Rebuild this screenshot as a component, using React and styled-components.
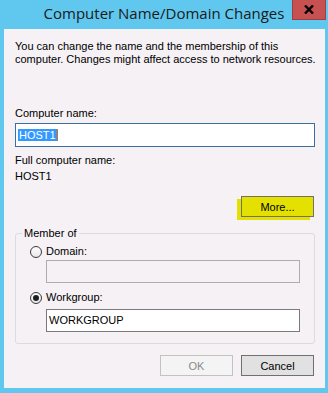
import React from 'react';
import styled, { createGlobalStyle } from 'styled-components';

const GlobalStyle = createGlobalStyle`
    html, body {
        margin: 0;
        padding: 0;
        background: #60c8ef;
    }
    * {
        box-sizing: border-box;
    }
`;

const Window = styled.div`
    width: 328px;
    height: 393px;
    background: #60c8ef;
    display: flex;
    flex-direction: column;
    font-family: "Liberation Sans", Arial, sans-serif;
    font-size: 11px;
    color: #000;
`;

const TitleBar = styled.div`
    height: 29px;
    display: grid;
    grid-template-columns: 1fr auto 1fr;
`;

const Title = styled.div`
    grid-column: 2;
    font-family: "Open Sans", "Noto Sans", sans-serif;
    font-size: 15px;
    line-height: 27px;
    color: #1a1a1a;
    white-space: nowrap;
`;

const CloseButton = styled.button`
    grid-column: 3;
    justify-self: end;
    align-self: start;
    width: 34px;
    height: 20px;
    margin-right: 2px;
    padding: 0;
    border: 1px solid #9e3f3f;
    border-top: none;
    background: #c75050;
    display: flex;
    align-items: center;
    justify-content: center;
`;

const Client = styled.div`
    flex: 1;
    margin: 0 3px 5px 4px;
    background: #f5f1f5;
    padding: 11px 10px 12px 11px;
    display: flex;
    flex-direction: column;
`;

const Text = styled.div`
    line-height: 13px;
    margin-top: ${(props) => props.$mt || 0}px;
    white-space: nowrap;
`;

const Field = styled.div`
    height: ${(props) => props.$h || 24}px;
    width: ${(props) => props.$w ? props.$w + 'px' : '100%'};
    margin-top: ${(props) => props.$mt || 0}px;
    margin-left: ${(props) => props.$ml || 0}px;
    border: 1px solid ${(props) => props.$border};
    background: ${(props) => props.$bg || '#fff'};
    padding: 0 2px;
    display: flex;
    align-items: center;
    line-height: 13px;
`;

const Selection = styled.span`
    background: #3399ff;
    color: #fff;
    line-height: 12px;
    padding: 0 1px;
`;

const Caret = styled.span`
    width: 1px;
    height: 12px;
    background: #e07000;
`;

const Button = styled.button`
    width: 73px;
    height: 21px;
    padding: 0;
    font-family: "Liberation Sans", Arial, sans-serif;
    font-size: 11px;
    color: ${(props) => props.disabled ? '#8a8a8a' : '#000'};
    background: ${(props) => props.disabled ? '#f4f4f4' : '#e1e1e1'};
    border: 1px solid ${(props) => props.disabled ? '#c2c2c2' : '#707070'};
`;

const MoreButton = styled(Button)`
    align-self: flex-end;
    margin-top: 13px;
    margin-right: 1px;
    background: #e4e000;
    box-shadow: -4px 3px 0 0 #e4e000;
`;

const Group = styled.fieldset`
    margin: 10px 0 0 0;
    padding: 0 14px 11px 14px;
    border: 1px solid #d7dde3;
    border-radius: 3px;
    min-inline-size: auto;
`;

const Legend = styled.legend`
    padding: 0 2px;
    margin-left: -8px;
    line-height: 13px;
`;

const RadioRow = styled.div`
    display: flex;
    align-items: center;
    gap: 4px;
    line-height: 13px;
    margin-top: ${(props) => props.$mt || 0}px;
`;

const Radio = styled.span`
    width: 12px;
    height: 12px;
    border-radius: 50%;
    border: 1px solid #3a3a3a;
    background: linear-gradient(#fdfdfd, #e8e8e8);
    display: flex;
    align-items: center;
    justify-content: center;

    &::after {
        content: '';
        width: 6px;
        height: 6px;
        border-radius: 50%;
        background: #1e1e1e;
        display: ${(props) => props.$checked ? 'block' : 'none'};
    }
`;

const ButtonRow = styled.div`
    display: flex;
    justify-content: flex-end;
    gap: 8px;
    margin-top: 11px;
    padding-right: 1px;
`;

const App = () => {
    return (
        <>
            <GlobalStyle />
            <Window>
                <TitleBar>
                    <Title>Computer Name/Domain Changes</Title>
                    <CloseButton>
                        <svg width="10" height="9" viewBox="0 0 10 9">
                            <path d="M1 0.5 L9 8.5 M9 0.5 L1 8.5" stroke="#000" strokeWidth="2.4" />
                        </svg>
                    </CloseButton>
                </TitleBar>
                <Client>
                    <Text>You can change the name and the membership of this</Text>
                    <Text>computer. Changes might affect access to network resources.</Text>

                    <Text $mt={41}>Computer name:</Text>
                    <Field $mt={3} $border="#3a6f9e">
                        <Selection>HOST1</Selection>
                        <Caret />
                    </Field>

                    <Text $mt={7}>Full computer name:</Text>
                    <Text $mt={3}>HOST1</Text>

                    <MoreButton>More...</MoreButton>

                    <Group>
                        <Legend>Member of</Legend>
                        <RadioRow $mt={5}>
                            <Radio />
                            <span>Domain:</span>
                        </RadioRow>
                        <Field $mt={2} $ml={16} $w={254} $h={23} $border="#adadad" $bg="#f5f1f5" />
                        <RadioRow $mt={8}>
                            <Radio $checked />
                            <span>Workgroup:</span>
                        </RadioRow>
                        <Field $mt={5} $ml={16} $w={254} $h={23} $border="#7a7a7a">WORKGROUP</Field>
                    </Group>

                    <ButtonRow>
                        <Button disabled>OK</Button>
                        <Button>Cancel</Button>
                    </ButtonRow>
                </Client>
            </Window>
        </>
    );
};

export default App;
